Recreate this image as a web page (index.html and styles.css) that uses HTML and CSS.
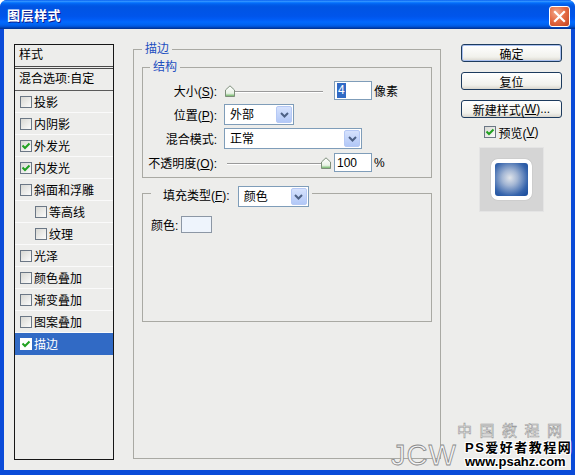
FILE: index.html
```html
<!DOCTYPE html>
<html lang="zh-CN">
<head>
<meta charset="utf-8">
<title>图层样式</title>
<link rel="stylesheet" href="styles.css">
</head>
<body>
<div class="window">
  <div class="titlebar">
    <span class="title">图层样式</span>
    <span class="close"><svg width="13" height="13" viewBox="0 0 13 13"><path d="M2 2 L11 11 M11 2 L2 11" stroke="#fff" stroke-width="2.2" stroke-linecap="square" fill="none"/></svg></span>
  </div>
  <div class="client">
    <div class="list">
      <div class="list-head">样式</div>
      <div class="list-blend">混合选项:自定</div>
      <div class="item"><span class="cb"></span>投影</div>
      <div class="item"><span class="cb"></span>内阴影</div>
      <div class="item"><span class="cb"><svg width="10" height="10" viewBox="0 0 10 10"><path d="M1.5 4.5 L4 7 L8.5 2.5" stroke="#21a121" stroke-width="2" fill="none"/></svg></span>外发光</div>
      <div class="item"><span class="cb"><svg width="10" height="10" viewBox="0 0 10 10"><path d="M1.5 4.5 L4 7 L8.5 2.5" stroke="#21a121" stroke-width="2" fill="none"/></svg></span>内发光</div>
      <div class="item"><span class="cb"></span>斜面和浮雕</div>
      <div class="item sub"><span class="cb"></span>等高线</div>
      <div class="item sub"><span class="cb"></span>纹理</div>
      <div class="item"><span class="cb"></span>光泽</div>
      <div class="item"><span class="cb"></span>颜色叠加</div>
      <div class="item"><span class="cb"></span>渐变叠加</div>
      <div class="item"><span class="cb"></span>图案叠加</div>
      <div class="item selected"><span class="cb"><svg width="10" height="10" viewBox="0 0 10 10"><path d="M1.5 4.5 L4 7 L8.5 2.5" stroke="#21a121" stroke-width="2" fill="none"/></svg></span>描边</div>
    </div>

    <fieldset class="group outer">
      <legend>描边</legend>
      <fieldset class="group inner">
        <legend>结构</legend>
        <div class="row">
          <span class="lbl">大小(<u>S</u>):</span>
          <span class="slider"><svg class="thumb" width="10" height="12" viewBox="0 0 10 12"><defs><linearGradient id="tg1" x1="0" y1="0" x2="0" y2="1"><stop offset="0" stop-color="#ffffff"/><stop offset="0.7" stop-color="#e9f2e6"/><stop offset="1" stop-color="#5fae55"/></linearGradient></defs><path d="M0.5 5 L5 0.8 L9.5 5 L9.5 11.5 L0.5 11.5 Z" fill="url(#tg1)" stroke="#7d8e7a"/></svg></span>
          <span class="textbox"><span class="hl">4</span></span>
          <span class="unit">像素</span>
        </div>
        <div class="row">
          <span class="lbl">位置(<u>P</u>):</span>
          <span class="combo w70">外部<span class="combo-btn"><svg width="9" height="6" viewBox="0 0 9 6"><path d="M1 1 L4.5 4.5 L8 1" stroke="#4d6185" stroke-width="2" fill="none"/></svg></span></span>
        </div>
        <div class="row">
          <span class="lbl">混合模式:</span>
          <span class="combo w138">正常<span class="combo-btn"><svg width="9" height="6" viewBox="0 0 9 6"><path d="M1 1 L4.5 4.5 L8 1" stroke="#4d6185" stroke-width="2" fill="none"/></svg></span></span>
        </div>
        <div class="row">
          <span class="lbl">不透明度(<u>O</u>):</span>
          <span class="slider right"><svg class="thumb" width="10" height="12" viewBox="0 0 10 12"><defs><linearGradient id="tg2" x1="0" y1="0" x2="0" y2="1"><stop offset="0" stop-color="#ffffff"/><stop offset="0.7" stop-color="#e9f2e6"/><stop offset="1" stop-color="#5fae55"/></linearGradient></defs><path d="M0.5 5 L5 0.8 L9.5 5 L9.5 11.5 L0.5 11.5 Z" fill="url(#tg2)" stroke="#7d8e7a"/></svg></span>
          <span class="textbox">100</span>
          <span class="unit">%</span>
        </div>
      </fieldset>

      <fieldset class="group fill">
        <legend><span class="legend-row"><span class="fill-lbl">填充类型(<u>F</u>):</span><span class="combo w71">颜色<span class="combo-btn"><svg width="9" height="6" viewBox="0 0 9 6"><path d="M1 1 L4.5 4.5 L8 1" stroke="#4d6185" stroke-width="2" fill="none"/></svg></span></span></span></legend>
        <div class="color-row"><span>颜色:</span><span class="swatch"></span></div>
      </fieldset>
    </fieldset>

    <div class="side">
      <div class="btn default">确定</div>
      <div class="btn">复位</div>
      <div class="btn">新建样式(<u>W</u>)...</div>
      <div class="preview-check"><span class="cb"><svg width="10" height="10" viewBox="0 0 10 10"><path d="M1.5 4.5 L4 7 L8.5 2.5" stroke="#21a121" stroke-width="2" fill="none"/></svg></span>预览(<u>V</u>)</div>
      <div class="preview-box"><div class="preview-icon"></div></div>
    </div>
  </div>

  <div class="wm wm-jcw">JCW</div>
  <div class="wm wm-cn">中国教程网</div>
  <div class="wm wm-ps">PS爱好者教程网</div>
  <div class="wm wm-www">www.psahz.com</div>
</div>
</body>
</html>
```

FILE: styles.css
```css
* { box-sizing: border-box; }

body {
  margin: 0;
  background: #ffffff;
  font-family: "Liberation Sans", "Noto Sans CJK SC", sans-serif;
  font-size: 12px;
  color: #000;
}

.window {
  position: relative;
  width: 575px;
  height: 475px;
  background: #0a4bd8;
  border-radius: 7px 7px 0 0;
  display: flex;
  flex-direction: column;
  overflow: hidden;
}

.titlebar {
  flex: none;
  height: 29px;
  display: flex;
  align-items: center;
  justify-content: space-between;
  padding: 0 5px 0 7px;
  background: linear-gradient(to bottom,
    #0058ee 0%, #3593ff 4%, #288eff 6%, #127dff 8%, #036ffc 10%,
    #0262ee 14%, #0057e5 20%, #0054e3 24%, #0055eb 56%, #005bf5 66%,
    #026afe 76%, #0062ef 86%, #0052d6 92%, #0040ab 96%, #003092 100%);
}

.title {
  color: #fff;
  font-family: "Noto Sans CJK SC", sans-serif;
  font-weight: bold;
  font-size: 13px;
  letter-spacing: 0.5px;
  text-shadow: 1px 1px 0 #0c1a8a;
}

.close {
  width: 21px;
  height: 21px;
  margin-top: 3px;
  border: 1px solid #fff;
  border-radius: 3px;
  background: radial-gradient(circle at 35% 30%, #f3a98c 0%, #e56d46 45%, #c4421e 100%);
  display: flex;
  align-items: center;
  justify-content: center;
}

.client {
  flex: 1;
  margin: 0 4px 5px 4px;
  background: #ededeb;
  display: flex;
  align-items: flex-start;
  padding: 13px 0 0 10px;
}

/* left style list */
.list {
  flex: none;
  width: 100px;
  height: 416px;
  margin-top: 2px;
  border: 1px solid #161616;
}

.list-head {
  height: 24px;
  line-height: 21px;
  padding-left: 4px;
  border-bottom: 3px double #4a4a4a;
}

.list-blend {
  height: 22px;
  line-height: 21px;
  padding-left: 4px;
  border-bottom: 1px solid #5a5a5a;
}

.item {
  height: 22px;
  display: flex;
  align-items: center;
  padding-left: 5px;
  border-bottom: 1px solid #fafafa;
}

.item.sub { padding-left: 20px; }

.item.selected {
  background: #316ac5;
  color: #fff;
  border-bottom-color: #316ac5;
}

.cb {
  flex: none;
  width: 12px;
  height: 12px;
  margin-right: 2px;
  border: 1px solid #6b7785;
  background: linear-gradient(135deg, #d8d8d3, #fbfbfb);
  display: flex;
  align-items: center;
  justify-content: center;
}

.item.selected .cb { background: #fff; border-color: #fff; }

/* group boxes */
.group {
  margin: 0;
  min-width: 0;
  border: 1px solid #a9a9a3;
}

.group > legend {
  color: #1e4fc0;
  line-height: 14px;
}

.outer {
  flex: none;
  width: 308px;
  height: 417px;
  margin-left: 19px;
  padding: 0 8px;
}

.outer > legend { padding: 0 3px; }

.inner {
  margin-top: 4px;
  padding: 6px 0 4px 2px;
}

.inner > legend {
  margin-left: 5px;
  padding: 0 3px;
}

.row {
  display: flex;
  align-items: center;
  height: 21px;
}

.row + .row { margin-top: 3px; }

.lbl {
  flex: none;
  width: 72px;
  margin-right: 7px;
  text-align: right;
  white-space: nowrap;
}

.slider {
  flex: none;
  width: 106px;
  height: 12px;
  margin-left: 1px;
  margin-right: 3px;
  display: flex;
  align-items: center;
  background:
    linear-gradient(#9a9a9a, #9a9a9a) no-repeat 2px 6px / 96px 1px,
    linear-gradient(#ffffff, #ffffff) no-repeat 2px 7px / 96px 1px;
}

.slider.right { justify-content: flex-end; }

.thumb { display: block; }

.textbox {
  flex: none;
  width: 38px;
  height: 19px;
  padding-left: 2px;
  border: 1px solid #7f9db9;
  background: #fff;
  display: flex;
  align-items: center;
}

.hl {
  background: #316ac5;
  color: #fff;
  padding: 0 1px;
  line-height: 15px;
}

.unit { margin-left: 2px; }

.combo {
  flex: none;
  height: 21px;
  padding-left: 5px;
  border: 1px solid #7f9db9;
  background: #fff;
  color: #000;
  display: flex;
  align-items: center;
  justify-content: space-between;
  line-height: 14px;
}

.w70 { width: 70px; }
.w71 { width: 71px; }
.w138 { width: 138px; }

.combo-btn {
  width: 16px;
  height: 17px;
  margin-right: 1px;
  border: 1px solid #b6c9f5;
  border-radius: 2px;
  background: linear-gradient(#d6e2fd, #b2c8f7);
  display: flex;
  align-items: center;
  justify-content: center;
}

.fill {
  margin-top: 8px;
  height: 136px;
  padding: 15px 0 0 8px;
}

.fill > legend {
  padding: 0 3px 0 12px;
  color: #000;
}

.legend-row {
  display: flex;
  height: 15px;
  align-items: flex-start;
}

.fill-lbl {
  line-height: 21px;
  margin-right: 8px;
  white-space: nowrap;
}

.color-row {
  display: flex;
  align-items: center;
  height: 17px;
}

.swatch {
  width: 31px;
  height: 17px;
  margin-left: 3px;
  border: 1px solid #8c97a5;
  background: #eef4fc;
}

/* right column */
.side {
  flex: none;
  width: 101px;
  margin-left: 20px;
  margin-top: 2px;
  display: flex;
  flex-direction: column;
  align-items: center;
}

.btn {
  width: 101px;
  height: 18px;
  border: 1px solid #1d3b5e;
  border-radius: 3px;
  background: linear-gradient(#ffffff, #f1f1ec 75%, #d9d6cd);
  display: flex;
  align-items: center;
  justify-content: center;
  white-space: nowrap;
}

.btn + .btn { margin-top: 10px; }

.btn.default { box-shadow: inset 0 0 0 1px #a9bfee; }

.preview-check {
  margin-top: 7px;
  height: 14px;
  display: flex;
  align-items: center;
}

.preview-box {
  margin-top: 8px;
  width: 65px;
  height: 65px;
  border: 1px solid #e4e4e4;
  background: #d5d5d5;
  display: flex;
  align-items: center;
  justify-content: center;
}

.preview-icon {
  width: 41px;
  height: 41px;
  border: 4px solid #fff;
  border-radius: 7px;
  background: radial-gradient(circle at 45% 45%, #e0e4ea 0%, #a3b6d4 30%, #3664ac 70%, #134899 100%);
  box-shadow: 0 0 1px rgba(0, 0, 0, 0.35);
}

/* watermark overlay */
.wm {
  position: absolute;
  white-space: nowrap;
  pointer-events: none;
}

.wm-jcw {
  left: 391px;
  top: 441px;
  font-family: "Liberation Sans", sans-serif;
  font-size: 29px;
  line-height: 28px;
  color: #f4f4f4;
  -webkit-text-stroke: 0.8px #8a8a8a;
  letter-spacing: 1px;
}

.wm-cn {
  left: 457px;
  top: 422px;
  font-family: "Noto Sans CJK SC", sans-serif;
  font-size: 15px;
  line-height: 15px;
  letter-spacing: 7.5px;
  color: #f2f2f2;
  -webkit-text-stroke: 0.6px #9a9a9a;
}

.wm-ps {
  left: 465px;
  top: 441px;
  font-family: "Liberation Sans", "Noto Sans CJK SC", sans-serif;
  font-weight: bold;
  font-size: 13px;
  line-height: 13px;
  letter-spacing: 1.5px;
  color: #000;
  text-shadow: 1px 0 #fff, -1px 0 #fff, 0 1px #fff, 0 -1px #fff, 1px 1px #fff, -1px -1px #fff, 1px -1px #fff, -1px 1px #fff;
}

.wm-www {
  left: 465px;
  top: 455px;
  font-family: "Liberation Sans", sans-serif;
  font-weight: bold;
  font-size: 13px;
  line-height: 13px;
  color: #000;
  text-shadow: 1px 0 #fff, -1px 0 #fff, 0 1px #fff, 0 -1px #fff, 1px 1px #fff, -1px -1px #fff, 1px -1px #fff, -1px 1px #fff;
}
```
